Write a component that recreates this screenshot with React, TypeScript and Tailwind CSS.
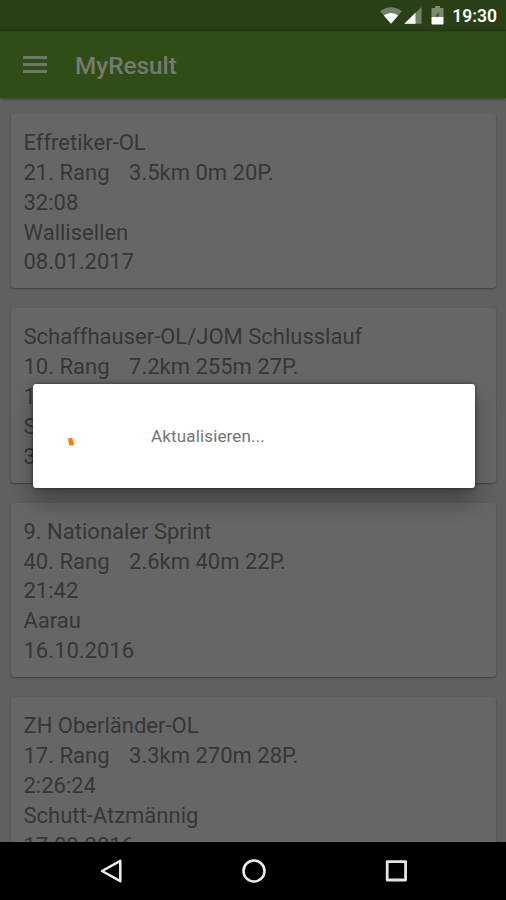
type Result = {
  event: string;
  rank: string;
  course: string;
  time: string;
  place: string;
  date: string;
};

const results: Result[] = [
  { event: "Effretiker-OL", rank: "21. Rang", course: "3.5km 0m 20P.", time: "32:08", place: "Wallisellen", date: "08.01.2017" },
  { event: "Schaffhauser-OL/JOM Schlusslauf", rank: "10. Rang", course: "7.2km 255m 27P.", time: "1:12:45", place: "Schaffhausen", date: "30.10.2016" },
  { event: "9. Nationaler Sprint", rank: "40. Rang", course: "2.6km 40m 22P.", time: "21:42", place: "Aarau", date: "16.10.2016" },
  { event: "ZH Oberländer-OL", rank: "17. Rang", course: "3.3km 270m 28P.", time: "2:26:24", place: "Schutt-Atzmännig", date: "17.09.2016" },
];

function StatusBar() {
  return (
    <div className="flex h-[30px] shrink-0 items-center justify-end bg-[#294016] pr-[9px] text-white">
      <svg width="22" height="17" viewBox="0 0 22 17" className="mt-px mr-[2px]">
        <path d="M0.2 4.2Q11-3.6 21.8 4.2L11 16.8Z" fill="#fff" fillOpacity="0.35" />
        <path d="M3.8 8.4Q11 3.4 18.2 8.4L11 16.8Z" fill="#fff" />
      </svg>
      <svg width="18" height="17" viewBox="0 0 18 17" className="mt-px mr-[9px]">
        <path d="M17.5 0V16.8H0.3Z" fill="#fff" fillOpacity="0.35" />
        <path d="M11.5 5.8V16.8H0.3Z" fill="#fff" />
      </svg>
      <svg width="13" height="19" viewBox="0 0 13 19" className="mt-px mr-[8px]">
        <path d="M1.5 2H4V0H9V2H11.5Q12.5 2 12.5 3V11H0.5V3Q0.5 2 1.5 2Z" fill="#fff" fillOpacity="0.4" />
        <path d="M0.5 11H12.5V17.5Q12.5 18.5 11.5 18.5H1.5Q0.5 18.5 0.5 17.5Z" fill="#fff" />
        <path d="M7.3 5.5L4 10.5H6V12L9 8.3H7.3Z" fill="#294016" fillOpacity="0.6" />
      </svg>
      <span className="pt-[2px] text-[17.5px] leading-[28px] font-semibold">19:30</span>
    </div>
  );
}

function AppBar() {
  return (
    <header className="relative flex h-[68px] shrink-0 items-center bg-[#304d17] pl-[23px] shadow-[0_1px_3px_rgba(0,0,0,0.4),inset_0_2px_2px_-1px_rgba(0,0,0,0.35)]">
      <div className="flex w-[24px] flex-col gap-[4px]">
        <div className="h-[3px] bg-[#6f7868]" />
        <div className="h-[3px] bg-[#6f7868]" />
        <div className="h-[3px] bg-[#6f7868]" />
      </div>
      <h1 className="ml-[28px] pt-[4px] text-[24.3px] leading-8 font-medium text-[#757b70]">MyResult</h1>
    </header>
  );
}

function ResultCard({ result }: { result: Result }) {
  return (
    <article className="h-[174.5px] shrink-0 rounded-[3px] bg-[#666] px-[12.5px] pt-[14.2px] text-[22px] leading-[29.85px] whitespace-pre text-[#363636] shadow-[0_1px_2px_rgba(0,0,0,0.35)]">
      <h2>{result.event}</h2>
      <p className="flex gap-[19.5px]">
        <span>{result.rank}</span>
        <span>{result.course}</span>
      </p>
      <p>{result.time}</p>
      <p>{result.place}</p>
      <p>{result.date}</p>
    </article>
  );
}

function NavigationBar() {
  return (
    <nav className="flex h-[58px] shrink-0 items-center justify-center gap-[118px] bg-black pl-[2px]">
      <svg width="24" height="26" viewBox="0 0 24 26" fill="none" stroke="#eee" strokeWidth="2.5" strokeLinejoin="round">
        <path d="M21.3 2.8V23.2L3 13Z" />
      </svg>
      <svg width="26" height="26" viewBox="0 0 26 26" fill="none" stroke="#eee" strokeWidth="2.6">
        <circle cx="13" cy="13" r="10.5" />
      </svg>
      <svg width="24" height="26" viewBox="0 0 24 26" fill="none" stroke="#e4e4e4" strokeWidth="2.8" strokeLinejoin="round">
        <rect x="2.2" y="3.6" width="18.4" height="18.4" />
      </svg>
    </nav>
  );
}

export default function App() {
  return (
    <div className="relative flex h-[900px] w-[506px] flex-col overflow-hidden bg-[#606060] font-['Roboto',sans-serif]">
      <StatusBar />
      <AppBar />
      <main className="flex min-h-0 flex-1 flex-col gap-[19.9px] overflow-hidden px-[11px] pr-[10px] pt-[15.8px]">
        {results.map((result) => (
          <ResultCard key={result.date} result={result} />
        ))}
      </main>
      <NavigationBar />
      <div
        role="dialog"
        className="absolute top-[384px] left-[33px] flex h-[104px] w-[442px] items-center rounded-[3px] bg-white shadow-[0_14px_22px_rgba(0,0,0,0.3),0_0_4px_rgba(0,0,0,0.5)]"
      >
        <svg width="8" height="10" viewBox="0 0 8 10" className="mt-[11px] ml-[34px]">
          <path d="M0.9 1.6L5.2 0.8 7.2 8 2.4 8.8Z" fill="#f57c00" />
        </svg>
        <span className="ml-[76px] text-[17px] leading-6 tracking-[0.15px] text-[#757575]">Aktualisieren...</span>
      </div>
    </div>
  );
}
